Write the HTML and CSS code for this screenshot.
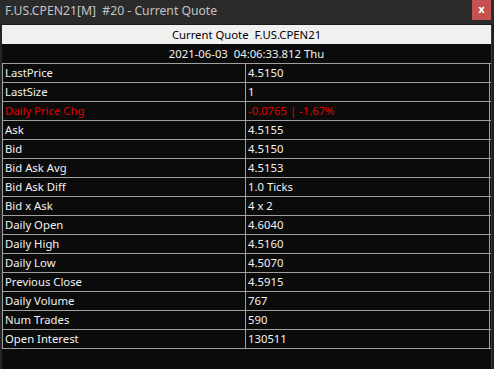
FILE: index.html
```html
<!DOCTYPE html>
<html lang="en">

<head>
    <meta charset="UTF-8" />
    <meta name="viewport" content="width=device-width, initial-scale=1.0" />
    <title>Current Quote</title>
    <link rel="stylesheet" href="styles.css">
</head>

<body>
    <div class="window">
        <div class="titlebar">
            <span class="title">F.US.CPEN21[M]  #20 - Current Quote</span>
            <button class="close">x</button>
        </div>
        <div class="frame">
            <div class="content">
                <div class="header">Current Quote  F.US.CPEN21</div>
                <div class="datetime">2021-06-03  04:06:33.812 Thu</div>
                <div class="grid">
                    <div class="row"><div class="cell">LastPrice</div><div class="cell">4.5150</div></div>
                    <div class="row"><div class="cell">LastSize</div><div class="cell">1</div></div>
                    <div class="row down"><div class="cell">Daily Price Chg</div><div class="cell">-0.0765 | -1.67%</div></div>
                    <div class="row"><div class="cell">Ask</div><div class="cell">4.5155</div></div>
                    <div class="row"><div class="cell">Bid</div><div class="cell">4.5150</div></div>
                    <div class="row"><div class="cell">Bid Ask Avg</div><div class="cell">4.5153</div></div>
                    <div class="row"><div class="cell">Bid Ask Diff</div><div class="cell">1.0 Ticks</div></div>
                    <div class="row"><div class="cell">Bid x Ask</div><div class="cell">4 x 2</div></div>
                    <div class="row"><div class="cell">Daily Open</div><div class="cell">4.6040</div></div>
                    <div class="row"><div class="cell">Daily High</div><div class="cell">4.5160</div></div>
                    <div class="row"><div class="cell">Daily Low</div><div class="cell">4.5070</div></div>
                    <div class="row"><div class="cell">Previous Close</div><div class="cell">4.5915</div></div>
                    <div class="row"><div class="cell">Daily Volume</div><div class="cell">767</div></div>
                    <div class="row"><div class="cell">Num Trades</div><div class="cell">590</div></div>
                    <div class="row"><div class="cell">Open Interest</div><div class="cell">130511</div></div>
                </div>
            </div>
        </div>
    </div>
</body>

</html>
```

FILE: styles.css
```css
body {
    margin: 0;
    background-color: #0b0b0b;
    font-family: "Noto Sans", "Open Sans", sans-serif;
    font-size: 11.3px;
}

.window {
    display: flex;
    flex-direction: column;
    height: 369px;
    overflow: hidden;
}

.titlebar {
    display: flex;
    align-items: flex-start;
    justify-content: space-between;
    height: 24px;
    background-color: #2b2b2b;
    border-bottom: 1px solid #1c1c1c;
}

.title {
    white-space: pre;
    color: #c4c4c4;
    font-size: 12.2px;
    line-height: 21px;
    padding-left: 5px;
}

.close {
    width: 19px;
    height: 20px;
    margin-right: 3px;
    padding: 0;
    border: none;
    background-color: #c75050;
    color: white;
    font-family: "DejaVu Sans", sans-serif;
    font-size: 10px;
    font-weight: bold;
    line-height: 18px;
}

.frame {
    flex: 1;
    display: flex;
    background-color: #0b0b0b;
    border-left: 2px solid #252525;
    border-right: 2px solid #1e1e1e;
}

.content {
    width: 489px;
    border-right: 1px solid #3a3a3a;
}

.header,
.datetime {
    height: 19px;
    line-height: 19px;
    text-align: center;
    white-space: pre;
}

.header {
    background-color: #f0f0f0;
    color: #000;
}

.datetime {
    color: #f2f2f2;
}

.grid {
    border-top: 1px solid #a0a0a0;
    border-left: 1px solid #a0a0a0;
}

.row {
    display: grid;
    grid-template-columns: 243px 244px;
    border-bottom: 1px solid #a0a0a0;
    color: #f2f2f2;
}

.row.down {
    color: #e00000;
}

.cell {
    height: 18px;
    line-height: 18px;
    padding-left: 2px;
    border-right: 1px solid #a0a0a0;
    white-space: pre;
}
```
